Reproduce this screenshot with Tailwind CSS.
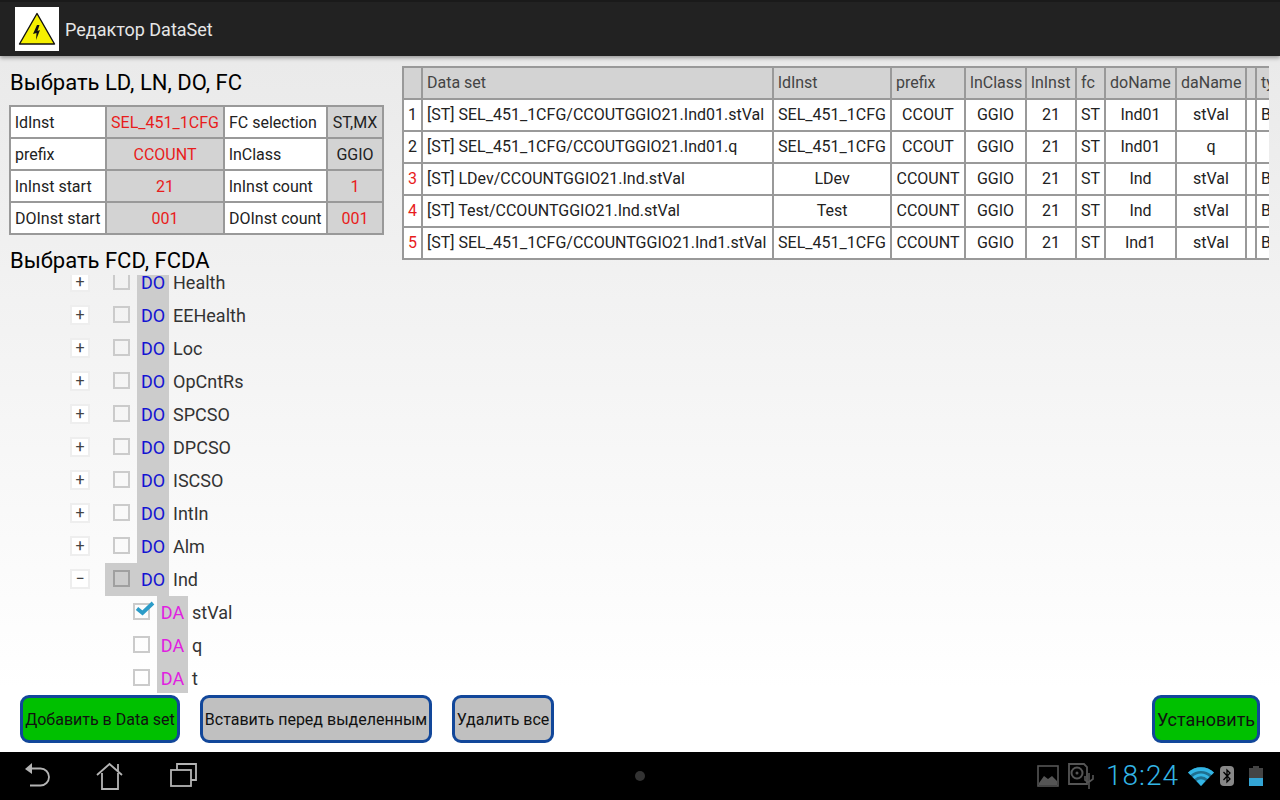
<!DOCTYPE html>
<html lang="ru">

<head>
    <meta charset="UTF-8">
    <meta name="viewport" content="width=device-width, initial-scale=1.0">
    <title>Редактор DataSet</title>
    <script src="https://cdn.jsdelivr.net/npm/@tailwindcss/browser@4"></script>
</head>

<body class="font-['Roboto',sans-serif]">
    <div class="w-[1280px] h-[800px] flex flex-col overflow-hidden bg-gradient-to-b from-[#e8e8e8] to-white to-[86%]">
        <!-- Action bar -->
        <header class="h-[56px] shrink-0 flex items-center bg-[#222222] border-t-[2px] border-[#1a1a1a] shadow-[0_2px_4px_rgba(0,0,0,0.35)] z-10">
            <div class="w-[44px] h-[44px] ml-[15px] bg-white flex items-center justify-center">
                <svg width="38" height="34" viewBox="0 0 38 34">
                    <path d="M19 1.500 L36.500 32 H1.500 Z" fill="#f6f000" stroke="#111" stroke-width="1.400" stroke-linejoin="round"/>
                    <path d="M19 13 L15 22 L18.500 21 L18 28 L22 18 L19.500 19 L21.500 13 Z" fill="#111"/>
                </svg>
            </div>
            <span class="ml-[6px] text-[18px] text-[#e6e6e6]">Редактор DataSet</span>
        </header>

        <main class="flex-1 flex min-h-0">
            <!-- Left column -->
            <section class="w-[403px] shrink-0 pl-[10px] flex flex-col">
                <h2 class="mt-[12px] h-[30px] leading-[30px] text-[22px] text-black">Выбрать LD, LN, DO, FC</h2>
                <table class="mt-[7px] -ml-[1px] w-[373px] table-fixed border-collapse text-[16px] text-[#222]">
                    <colgroup>
                        <col class="w-[96px]">
                        <col class="w-[118px]">
                        <col class="w-[103px]">
                        <col class="w-[56px]">
                    </colgroup>
                    <tbody id="params"></tbody>
                </table>
                <h2 class="mt-[11px] h-[29px] leading-[30px] text-[22px] text-black">Выбрать FCD, FCDA</h2>
                <div class="h-[419px] overflow-hidden -ml-[10px]">
                    <div id="tree" class="-mt-[9px]"></div>
                </div>
            </section>

            <!-- Data set table -->
            <section class="w-[867px] h-[202px] mt-[10px] -ml-[1px] overflow-hidden">
                <table class="w-[927px] table-fixed border-collapse text-[16px] text-[#222]">
                    <colgroup>
                        <col class="w-[19px]">
                        <col class="w-[351px]">
                        <col class="w-[118px]">
                        <col class="w-[74px]">
                        <col class="w-[61px]">
                        <col class="w-[50px]">
                        <col class="w-[29px]">
                        <col class="w-[71px]">
                        <col class="w-[70px]">
                        <col class="w-[10px]">
                        <col class="w-[74px]">
                    </colgroup>
                    <thead>
                        <tr class="h-[32px] bg-[#d3d3d3] text-[#444]">
                            <th class="border-2 border-[#999] font-normal"></th>
                            <th class="border-2 border-[#999] font-normal text-left pl-[4px]">Data set</th>
                            <th class="border-2 border-[#999] font-normal text-left pl-[4px]">ldInst</th>
                            <th class="border-2 border-[#999] font-normal text-left pl-[4px]">prefix</th>
                            <th class="border-2 border-[#999] font-normal text-left pl-[4px]">lnClass</th>
                            <th class="border-2 border-[#999] font-normal text-left pl-[4px]">lnInst</th>
                            <th class="border-2 border-[#999] font-normal text-left pl-[4px]">fc</th>
                            <th class="border-2 border-[#999] font-normal text-left pl-[4px]">doName</th>
                            <th class="border-2 border-[#999] font-normal text-left pl-[4px]">daName</th>
                            <th class="border-2 border-[#999] font-normal"></th>
                            <th class="border-2 border-[#999] font-normal text-left pl-[4px]">type</th>
                        </tr>
                    </thead>
                    <tbody id="dataset" class="bg-white"></tbody>
                </table>
            </section>
        </main>

        <!-- Buttons -->
        <div class="h-[59px] shrink-0 flex items-start pt-[2px] pl-[20px] pr-[20px] gap-[20px] text-[16px] text-[#111]">
            <button class="w-[160px] h-[48px] pt-[1px] rounded-[9px] border-[3px] border-[#12479a] bg-[#00c000] whitespace-nowrap">Добавить в Data set</button>
            <button class="w-[232px] h-[48px] pt-[1px] rounded-[9px] border-[3px] border-[#12479a] bg-[#c0c0c0] whitespace-nowrap">Вставить перед выделенным</button>
            <button class="w-[102px] h-[48px] pt-[1px] rounded-[9px] border-[3px] border-[#12479a] bg-[#c0c0c0] whitespace-nowrap">Удалить все</button>
            <button class="w-[108px] h-[48px] pt-[1px] ml-auto rounded-[9px] border-[3px] border-[#12479a] bg-[#00c000] whitespace-nowrap text-[18px]">Установить</button>
        </div>

        <!-- System bar -->
        <nav class="h-[48px] shrink-0 bg-black grid grid-cols-[1fr_10px_1fr] items-center">
            <div class="flex items-center">
                <svg class="ml-[24px]" width="28" height="28" viewBox="0 0 28 28" fill="none" stroke="#b4b4b4" stroke-width="1.800">
                    <path d="M1 7 L8 1 V12 Z" fill="#b4b4b4" stroke="none"/>
                    <path d="M7 6.500 H16.500 A8.500 8.500 0 0 1 16.500 23.500 H6"/>
                </svg>
                <svg class="ml-[44px]" width="28" height="28" viewBox="0 0 28 28" fill="none" stroke="#b4b4b4" stroke-width="1.800">
                    <path d="M1 13 L13.500 2 L26 13"/>
                    <path d="M22 2 V9"/>
                    <path d="M6 11 V27 H22 V11"/>
                </svg>
                <svg class="ml-[46px]" width="28" height="28" viewBox="0 0 28 28" fill="none" stroke="#b4b4b4" stroke-width="1.800">
                    <rect x="1" y="8" width="20" height="16"/>
                    <path d="M7 8 V2 H26 V18 H21"/>
                </svg>
            </div>
            <div class="w-[10px] h-[10px] rounded-full bg-[#333]"></div>
            <div class="flex items-center justify-end pr-[17px]">
                <svg width="22" height="22" viewBox="0 0 22 22" fill="none">
                    <rect x="1" y="1" width="20" height="20" stroke="#555" stroke-width="1.600"/>
                    <path d="M2 18 L7 11 L11 14 L15 11 L20 16 V20 H2 Z" fill="#555"/>
                </svg>
                <svg class="ml-[8px]" width="28" height="27" viewBox="0 0 28 27" fill="none">
                    <path d="M2 1 H17 L20 4 V21 H2 Z" stroke="#555" stroke-width="1.800"/>
                    <circle cx="10" cy="10" r="5.500" stroke="#555" stroke-width="2"/>
                    <circle cx="10" cy="10" r="1.500" fill="#555"/>
                    <path d="M22 10 V26 M18 13 V17 L22 20 M26 12 V16 L22 19" stroke="#555" stroke-width="1.600"/>
                </svg>
                <span class="ml-[11px] w-[76px] text-[28px] leading-[34px] font-light text-[#33b5e5] tracking-[1px]">18:24</span>
                <svg class="ml-[6px]" width="26" height="20" viewBox="0 0 26 20">
                    <path d="M0 6.500 A19 19 0 0 1 26 6.500 L13 20 Z" fill="#1f6f8f"/>
                    <path d="M0 6.500 A19 19 0 0 1 26 6.500 L23.500 9 A15.500 15.500 0 0 0 2.500 9 Z" fill="#33b5e5"/>
                    <path d="M4.500 11 A12 12 0 0 1 21.500 11 L19.500 13 A9 9 0 0 0 6.500 13 Z" fill="#33b5e5"/>
                    <path d="M8.500 15 A6.500 6.500 0 0 1 17.500 15 L13 20 Z" fill="#33b5e5"/>
                </svg>
                <svg class="ml-[6px]" width="14" height="20" viewBox="0 0 14 20" fill="none">
                    <rect width="14" height="20" rx="4" fill="#888"/>
                    <path d="M3.500 6 L10 13 L7 16 V4 L10 7 L3.500 14" stroke="#000" stroke-width="1.300"/>
                </svg>
                <div class="ml-[15px] w-[14px] h-[20px] flex flex-col items-center">
                    <div class="w-[6px] h-[2px] bg-[#444]"></div>
                    <div class="w-[14px] h-[10px] bg-[#444]"></div>
                    <div class="w-[14px] h-[8px] bg-[#33a5d5]"></div>
                </div>
            </div>
        </nav>
    </div>

    <script>
        const params = [
            ['ldInst', 'SEL_451_1CFG', 'FC selection', 'ST,MX', false],
            ['prefix', 'CCOUNT', 'lnClass', 'GGIO', false],
            ['lnInst start', '21', 'lnInst count', '1', true],
            ['DOInst start', '001', 'DOInst count', '001', true]
        ];

        const rows = [
            ['SEL_451_1CFG/CCOUTGGIO21.Ind01.stVal', 'SEL_451_1CFG', 'CCOUT', 'Ind01', 'stVal', 'B', false],
            ['SEL_451_1CFG/CCOUTGGIO21.Ind01.q', 'SEL_451_1CFG', 'CCOUT', 'Ind01', 'q', '', false],
            ['LDev/CCOUNTGGIO21.Ind.stVal', 'LDev', 'CCOUNT', 'Ind', 'stVal', 'B', true],
            ['Test/CCOUNTGGIO21.Ind.stVal', 'Test', 'CCOUNT', 'Ind', 'stVal', 'B', true],
            ['SEL_451_1CFG/CCOUNTGGIO21.Ind1.stVal', 'SEL_451_1CFG', 'CCOUNT', 'Ind1', 'stVal', 'B', true]
        ];

        const doNames = ['Health', 'EEHealth', 'Loc', 'OpCntRs', 'SPCSO', 'DPCSO', 'ISCSO', 'IntIn', 'Alm', 'Ind'];
        const daNames = ['stVal', 'q', 't'];

        const cell = 'border-2 border-[#999] px-[4px] whitespace-nowrap overflow-hidden';

        // Left parameter table
        document.getElementById('params').innerHTML = params.map(p => `
            <tr class="h-[32px]">
                <td class="${cell} pt-[2px] bg-white">${p[0]}</td>
                <td class="${cell} pt-[2px] bg-[#d3d3d3] text-center text-[#e81c1c]">${p[1]}</td>
                <td class="${cell} pt-[2px] bg-white">${p[2]}</td>
                <td class="${cell} pt-[2px] bg-[#d3d3d3] text-center ${p[4] ? 'text-[#e81c1c]' : ''}">${p[3]}</td>
            </tr>`).join('');

        // Data set rows
        document.getElementById('dataset').innerHTML = rows.map((r, i) => `
            <tr class="h-[32px] text-center">
                <td class="${cell} ${r[6] ? 'text-[#e81c1c]' : ''}">${i + 1}</td>
                <td class="${cell} text-left">[ST] ${r[0]}</td>
                <td class="${cell}">${r[1]}</td>
                <td class="${cell}">${r[2]}</td>
                <td class="${cell}">GGIO</td>
                <td class="${cell}">21</td>
                <td class="${cell}">ST</td>
                <td class="${cell}">${r[3]}</td>
                <td class="${cell}">${r[4]}</td>
                <td class="${cell}"></td>
                <td class="${cell} text-left">${r[5]}</td>
            </tr>`).join('');

        // Checkbox for the tree
        function checkbox(checked, selected) {
            const tick = checked
                ? `<svg class="absolute -top-[4px] left-[0px]" width="20" height="15" viewBox="0 0 20 15"><path d="M2 7.500 L7.500 12 L18 2" fill="none" stroke="#2c9cc8" stroke-width="3.800"/></svg>`
                : '';
            return `<div class="relative w-[17px] h-[17px] mb-[2px] border-2 ${selected ? 'border-[#a0a0a0]' : 'border-[#cbcbcb]'}">${tick}</div>`;
        }

        // DO and DA rows of the tree
        document.getElementById('tree').innerHTML =
            doNames.map(name => {
                const open = name === 'Ind';
                return `
                <div class="flex h-[33px] items-center text-[18px] text-[#333]">
                    <div class="w-[105px] pr-[15px] flex justify-end">
                        <div class="w-[20px] h-[20px] mb-[2px] border-2 border-[#eeeeee] bg-white flex items-center justify-center text-[16px] leading-none text-[#444]">${open ? '−' : '+'}</div>
                    </div>
                    <div class="w-[32px] h-full pl-[8px] flex items-center ${open ? 'bg-[#cccccc]' : ''}">${checkbox(false, open)}</div>
                    <div class="w-[32px] h-full bg-[#cccccc] flex items-center justify-center text-[#1414d2]">DO</div>
                    <span class="ml-[4px]">${name}</span>
                </div>`;
            }).join('') +
            daNames.map((name, i) => `
                <div class="flex h-[33px] items-center text-[18px] text-[#333]">
                    <div class="w-[157px] pl-[133px] flex items-center">${checkbox(i === 0, false)}</div>
                    <div class="w-[31px] h-full bg-[#cccccc] flex items-center justify-center text-[#e020e0]">DA</div>
                    <span class="ml-[4px]">${name}</span>
                </div>`).join('');
    </script>
</body>

</html>
